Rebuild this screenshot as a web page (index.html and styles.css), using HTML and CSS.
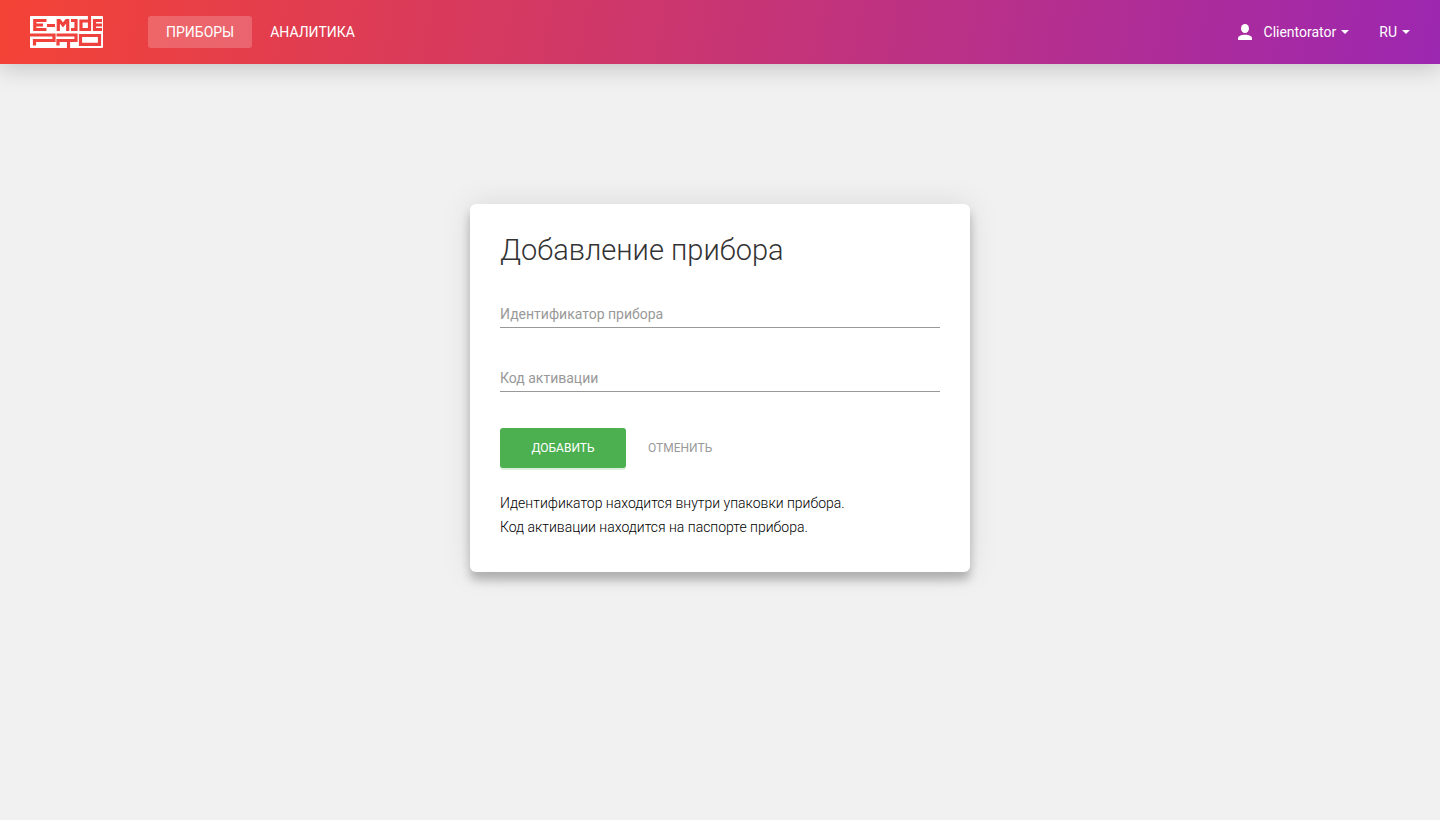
FILE: index.html
```
<!DOCTYPE html>
<html lang="ru">
<head>
    <meta charset="UTF-8">
    <meta name="viewport" content="width=device-width, initial-scale=1.0">
    <title>Добавление прибора</title>
    <link rel="stylesheet" href="styles.css">
</head>
<body>
    <header class="navbar">
        <a href="#" class="logo" aria-label="E-Mode Pro">
            <svg width="73" height="32" viewBox="0 0 73 32">
                <mask id="logoMask">
                    <rect width="73" height="32" rx="1" fill="#fff"/>
                    <g fill="none" stroke="#000" stroke-width="3.200">
                        <!-- E-MODE -->
                        <path d="M16.500 4.500H4.800V13.500H16.500M4.500 9H13M17 9.500H25"/>
                        <path d="M28.300 15V4.500H29.500L33 9L36.500 4.500H37.700V15"/>
                        <path d="M41 4.500H46V13.500H41"/>
                        <path d="M59.500 0V13.500H51V5H59.500"/>
                        <path d="M72 4.500H64.500V13.500H72M64.500 9H72"/>
                        <!-- PRO -->
                        <path d="M0 19H24V24.500H4.500V29.500"/>
                        <path d="M26.500 19H46V24.500H28V29.500M38.500 24.500V32"/>
                        <path d="M50.500 19.500H69.500V28.300H50.500Z"/>
                    </g>
                </mask>
                <rect width="73" height="32" fill="#fff" mask="url(#logoMask)"/>
            </svg>
        </a>
        <nav class="menu">
            <a href="#" class="active">ПРИБОРЫ</a>
            <a href="#">АНАЛИТИКА</a>
        </nav>
        <div class="account">
            <button type="button" class="user">
                <svg class="user-icon" width="14" height="16" viewBox="0 0 14 16">
                    <ellipse cx="7" cy="4.500" rx="4" ry="4.500" fill="#fff"/>
                    <path d="M0 16V14.500C0 12 3 10.800 7 10.800S14 12 14 14.500V16Z" fill="#fff"/>
                </svg>
                Clientorator
                <span class="caret"></span>
            </button>
            <button type="button" class="lang">RU <span class="caret"></span></button>
        </div>
    </header>

    <main class="card">
        <h1>Добавление прибора</h1>
        <form>
            <input type="text" id="deviceId" placeholder="Идентификатор прибора" aria-label="Идентификатор прибора">
            <input type="text" id="activationCode" placeholder="Код активации" aria-label="Код активации">
            <div class="actions">
                <button type="submit" class="submit">ДОБАВИТЬ</button>
                <button type="button" class="cancel">ОТМЕНИТЬ</button>
            </div>
        </form>
        <p>Идентификатор находится внутри упаковки прибора.</p>
        <p>Код активации находится на паспорте прибора.</p>
    </main>
</body>
</html>
```

FILE: styles.css
```
:root {
    --bg-color: #f1f1f1;
    --text-color: #000000;
    --muted-color: #999999;
    --button-bg-color: #4caf50;
}

* {
    box-sizing: border-box;
}

body {
    margin: 0;
    font-family: Roboto, "Liberation Sans", sans-serif;
    font-size: 14px;
    line-height: 24px;
    min-height: 100vh;
    background-color: var(--bg-color);
    color: var(--text-color);
}

button {
    border: none;
    background: none;
    padding: 0;
    font-family: inherit;
    font-size: 14px;
    cursor: pointer;
}

.navbar {
    display: flex;
    align-items: center;
    height: 64px;
    padding: 0 30px;
    background: linear-gradient(100deg, #f44336, #9c27b0);
    box-shadow: 0 4px 24px rgba(0, 0, 0, 0.2);
}

.logo {
    display: flex;
}

.menu {
    display: flex;
    margin-left: 45px;
}

.menu a {
    padding: 0 18px;
    line-height: 32px;
    border-radius: 3px;
    color: #fff;
    text-decoration: none;
}

.menu a.active {
    background: rgba(255, 255, 255, 0.2);
}

.account {
    display: flex;
    align-items: center;
    gap: 30px;
    margin-left: auto;
}

.account button {
    display: flex;
    align-items: center;
    color: #fff;
    line-height: 24px;
}

.user-icon {
    margin-right: 12px;
}

.caret {
    margin-left: 5px;
    border-top: 4px solid #fff;
    border-left: 4px solid transparent;
    border-right: 4px solid transparent;
}

/* Form card */
.card {
    width: 90%;
    max-width: 500px;
    margin: 140px auto 0;
    padding: 28px 30px 33px;
    border-radius: 6px;
    background: #fff;
    box-shadow: 0 8px 10px rgba(0, 0, 0, 0.24), 0 0 30px rgba(0, 0, 0, 0.1);
}

h1 {
    margin: 0 0 32px;
    font-size: 29px;
    font-weight: 300;
    line-height: 36px;
    color: #333;
}

input {
    display: block;
    width: 100%;
    height: 28px;
    margin-bottom: 36px;
    padding: 1px 0 0;
    border: none;
    border-bottom: 1px solid var(--muted-color);
    outline: none;
    background: none;
    font-family: inherit;
    font-size: 14px;
}

input::placeholder {
    color: var(--muted-color);
    opacity: 1;
}

.actions {
    display: flex;
    gap: 22px;
    margin-bottom: 23px;
}

.actions button {
    height: 40px;
    font-size: 12px;
}

.submit {
    width: 126px;
    border-radius: 3px;
    background: var(--button-bg-color);
    box-shadow: 0 2px 0 rgba(76, 175, 80, 0.2);
    color: #fff;
}

.cancel {
    color: var(--muted-color);
}

p {
    margin: 0;
    font-weight: 300;
}
```
